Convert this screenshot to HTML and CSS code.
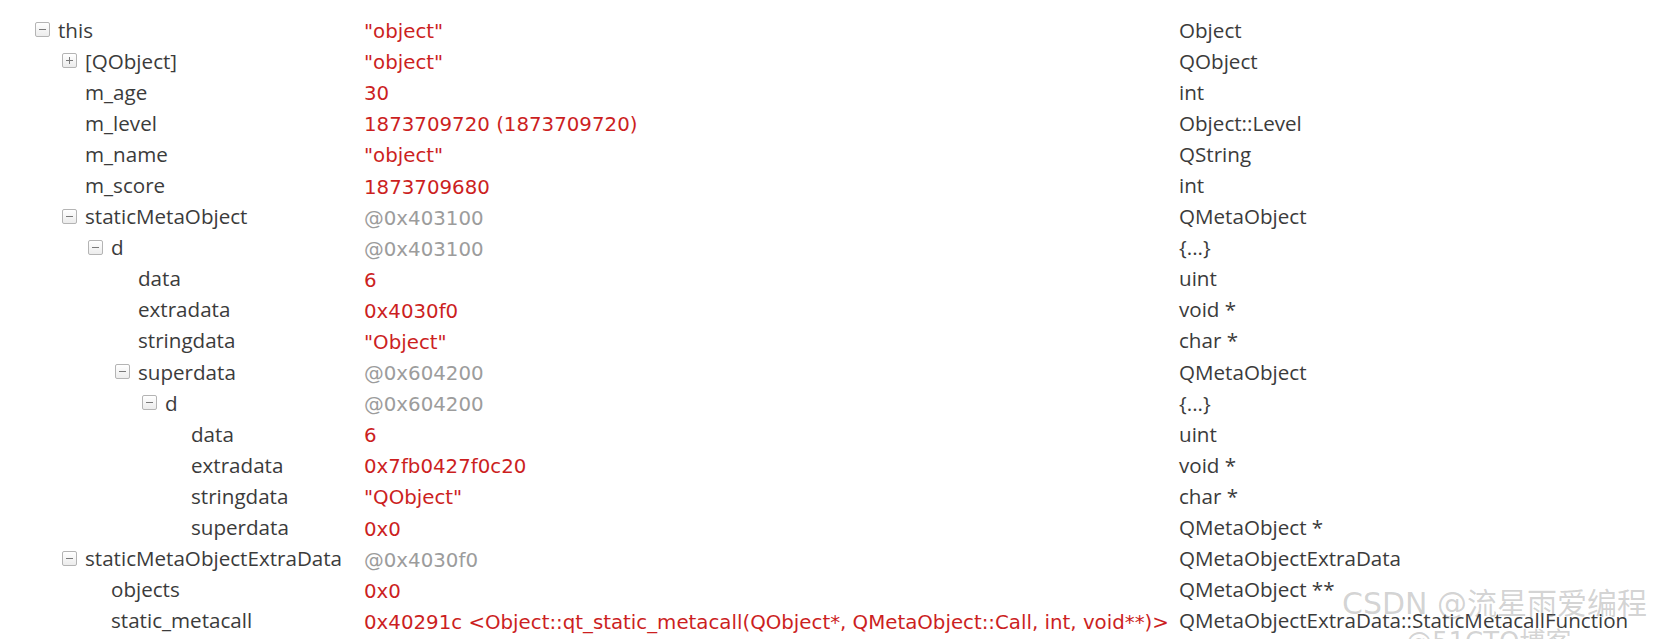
FILE: index.html
```html
<!DOCTYPE html>
<html>
<head>
<meta charset="utf-8">
<link rel="stylesheet" href="styles.css">
</head>
<body>
<div class="tree">
  <div class="row"><div class="name d0"><span class="box minus"></span>this</div><div class="val red">"object"</div><div class="type">Object</div></div>
  <div class="row"><div class="name d1"><span class="box plus"></span>[QObject]</div><div class="val red">"object"</div><div class="type">QObject</div></div>
  <div class="row"><div class="name d1"><span class="leaf"></span>m_age</div><div class="val red">30</div><div class="type">int</div></div>
  <div class="row"><div class="name d1"><span class="leaf"></span>m_level</div><div class="val red">1873709720 (1873709720)</div><div class="type">Object::Level</div></div>
  <div class="row"><div class="name d1"><span class="leaf"></span>m_name</div><div class="val red">"object"</div><div class="type">QString</div></div>
  <div class="row"><div class="name d1"><span class="leaf"></span>m_score</div><div class="val red">1873709680</div><div class="type">int</div></div>
  <div class="row"><div class="name d1"><span class="box minus"></span>staticMetaObject</div><div class="val grey">@0x403100</div><div class="type">QMetaObject</div></div>
  <div class="row"><div class="name d2"><span class="box minus"></span>d</div><div class="val grey">@0x403100</div><div class="type">{...}</div></div>
  <div class="row"><div class="name d3"><span class="leaf"></span>data</div><div class="val red">6</div><div class="type">uint</div></div>
  <div class="row"><div class="name d3"><span class="leaf"></span>extradata</div><div class="val red">0x4030f0</div><div class="type">void *</div></div>
  <div class="row"><div class="name d3"><span class="leaf"></span>stringdata</div><div class="val red">"Object"</div><div class="type">char *</div></div>
  <div class="row"><div class="name d3"><span class="box minus"></span>superdata</div><div class="val grey">@0x604200</div><div class="type">QMetaObject</div></div>
  <div class="row"><div class="name d4"><span class="box minus"></span>d</div><div class="val grey">@0x604200</div><div class="type">{...}</div></div>
  <div class="row"><div class="name d5"><span class="leaf"></span>data</div><div class="val red">6</div><div class="type">uint</div></div>
  <div class="row"><div class="name d5"><span class="leaf"></span>extradata</div><div class="val red">0x7fb0427f0c20</div><div class="type">void *</div></div>
  <div class="row"><div class="name d5"><span class="leaf"></span>stringdata</div><div class="val red">"QObject"</div><div class="type">char *</div></div>
  <div class="row"><div class="name d5"><span class="leaf"></span>superdata</div><div class="val red">0x0</div><div class="type">QMetaObject *</div></div>
  <div class="row"><div class="name d1"><span class="box minus"></span>staticMetaObjectExtraData</div><div class="val grey">@0x4030f0</div><div class="type">QMetaObjectExtraData</div></div>
  <div class="row"><div class="name d2"><span class="leaf"></span>objects</div><div class="val red">0x0</div><div class="type">QMetaObject **</div></div>
  <div class="row"><div class="name d2"><span class="leaf"></span>static_metacall</div><div class="val red">0x40291c &lt;Object::qt_static_metacall(QObject*, QMetaObject::Call, int, void**)&gt;</div><div class="type">QMetaObjectExtraData::StaticMetacallFunction</div></div>
</div>
<div class="watermark">
  <div class="wm-main">CSDN @流星雨爱编程</div>
  <div class="wm-sub">@51CTO博客</div>
</div>
</body>
</html>
```
FILE: styles.css
```css
html, body {
  margin: 0;
  padding: 0;
  background: #ffffff;
}
body {
  width: 1663px;
  height: 639px;
  overflow: hidden;
  position: relative;
  font-family: "Open Sans", "Noto Sans CJK SC", sans-serif;
  font-size: 20.6px;
  color: #3b3b3b;
}
.tree {
  padding-top: 14px;
}
.row {
  display: grid;
  grid-template-columns: 364px 815px 1fr;
  height: 31.1px;
  align-items: center;
  white-space: nowrap;
}
.name {
  display: flex;
  align-items: center;
  gap: 8px;
}
.d0 { padding-left: 35px; }
.d1 { padding-left: 62px; }
.d2 { padding-left: 88px; }
.d3 { padding-left: 115px; }
.d4 { padding-left: 142px; }
.d5 { padding-left: 168px; }
.box, .leaf {
  width: 15px;
  height: 15px;
  flex: none;
  box-sizing: border-box;
}
.box {
  border: 1px solid #b4b4b4;
  border-radius: 2px;
  background: linear-gradient(#ffffff, #ececec);
  position: relative;
}
.box::before {
  content: "";
  position: absolute;
  left: 3px;
  right: 3px;
  top: 6px;
  height: 1px;
  background: #7a7a7a;
}
.plus::after {
  content: "";
  position: absolute;
  top: 3px;
  bottom: 3px;
  left: 6px;
  width: 1px;
  background: #7a7a7a;
}
.val {
  font-family: "DejaVu Sans", sans-serif;
  font-size: 19.8px;
  padding-top: 4px;
}
.red { color: #cc1f1f; }
.grey { color: #9c9c9c; }
.type { color: #3b3b3b; }
.watermark {
  position: absolute;
  left: 1342px;
  top: 589px;
  font-family: "DejaVu Sans", "Noto Sans CJK SC", sans-serif;
  color: rgba(120, 120, 120, 0.32);
  white-space: nowrap;
  line-height: 1;
}
.wm-main {
  font-size: 30px;
}
.wm-sub {
  margin-top: 10px;
  margin-left: 64px;
  font-size: 26px;
}
```
